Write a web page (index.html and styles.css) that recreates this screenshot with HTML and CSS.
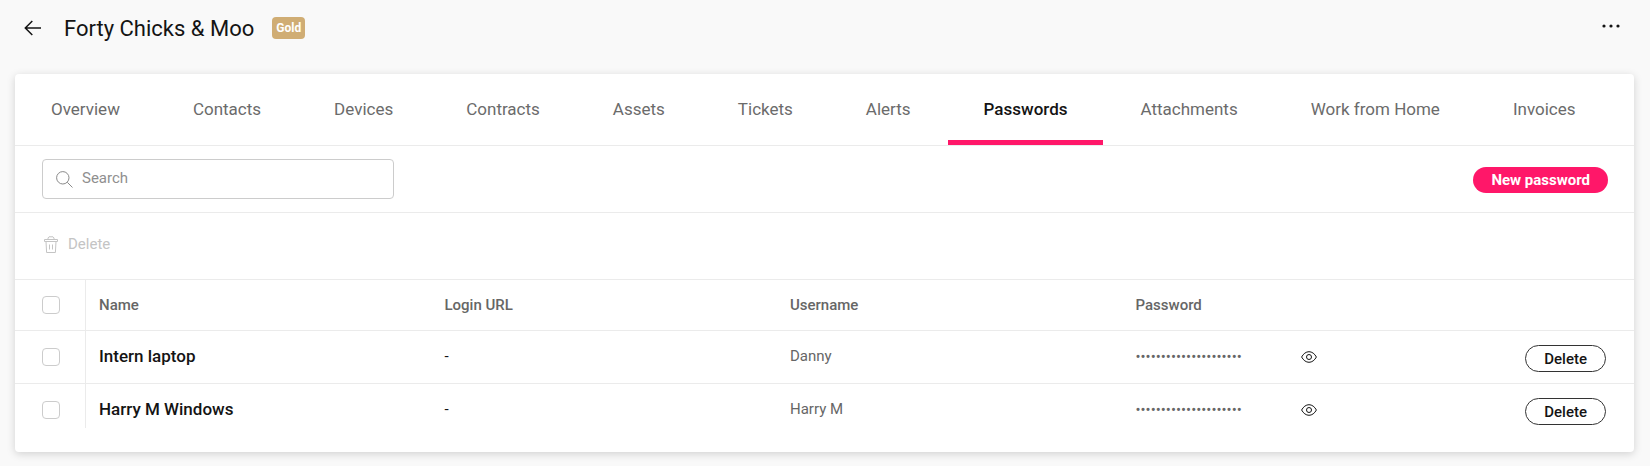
FILE: index.html
```html
<!DOCTYPE html>
<html lang="en">
<head>
<meta charset="utf-8">
<title>Forty Chicks &amp; Moo</title>
<link rel="stylesheet" href="styles.css">
</head>
<body>
<svg width="0" height="0" class="sprite" aria-hidden="true">
  <symbol id="eye" viewBox="0 0 16 12">
    <path d="M.6 6C2.400 2.700 5 .7 8 .7S13.600 2.700 15.400 6C13.600 9.300 11 11.300 8 11.300S2.400 9.300.6 6z"/>
    <circle cx="8" cy="6" r="2.500"/>
  </symbol>
</svg>
<header class="page-header">
  <button class="icon-button" type="button" aria-label="Back">
    <svg class="icon-back" viewBox="0 0 18 16"><path d="M17 8H1.500M8.300 1 1.300 8l7 7"/></svg>
  </button>
  <h1 class="title">Forty Chicks &amp; Moo</h1>
  <span class="badge">Gold</span>
  <button class="icon-button more" type="button" aria-label="More actions">
    <svg class="icon-more" viewBox="0 0 18 4"><circle cx="2" cy="2" r="1.600"/><circle cx="9" cy="2" r="1.600"/><circle cx="16" cy="2" r="1.600"/></svg>
  </button>
</header>
<main class="card">
  <nav class="tabs">
    <a class="tab" href="#">Overview</a>
    <a class="tab" href="#">Contacts</a>
    <a class="tab" href="#">Devices</a>
    <a class="tab" href="#">Contracts</a>
    <a class="tab" href="#">Assets</a>
    <a class="tab" href="#">Tickets</a>
    <a class="tab" href="#">Alerts</a>
    <a class="tab tab-active" href="#" aria-current="page">Passwords</a>
    <a class="tab" href="#">Attachments</a>
    <a class="tab" href="#">Work from Home</a>
    <a class="tab" href="#">Invoices</a>
  </nav>
  <div class="toolbar">
    <label class="search">
      <svg class="icon-search" viewBox="0 0 17 17"><circle cx="6.800" cy="6.800" r="6.200"/><path d="m11.300 11.300 5.200 5.200"/></svg>
      <input class="search-input" type="text" placeholder="Search" aria-label="Search">
    </label>
    <button class="primary" type="button">New password</button>
  </div>
  <div class="bulk">
    <button class="bulk-delete" type="button" disabled>
      <svg class="icon-trash" viewBox="0 0 14 17"><path d="M.5 5.500v-2h13v2zM4 3.500V2L5 .8h4L10 2v1.500M2 5.500l.6 11h8.800l.6-11M5.500 8.500v5M8.500 8.500v5"/></svg>
      Delete
    </button>
  </div>
  <table class="grid">
    <colgroup><col class="col-check"><col><col><col><col><col class="col-action"></colgroup>
    <thead>
      <tr>
        <th class="check"><input class="box" type="checkbox" aria-label="Select all"></th>
        <th>Name</th><th>Login URL</th><th>Username</th><th>Password</th><th></th>
      </tr>
    </thead>
    <tbody>
      <tr>
        <td class="check"><input class="box" type="checkbox" aria-label="Select Intern laptop"></td>
        <td class="name">Intern laptop</td><td class="url">-</td><td>Danny</td>
        <td><div class="secret"><span class="dots">•••••••••••••••••••••</span><button class="icon-button" type="button" aria-label="Show password"><svg class="icon-eye"><use href="#eye"/></svg></button></div></td>
        <td class="action"><button class="outline" type="button">Delete</button></td>
      </tr>
      <tr>
        <td class="check"><input class="box" type="checkbox" aria-label="Select Harry M Windows"></td>
        <td class="name">Harry M Windows</td><td class="url">-</td><td>Harry M</td>
        <td><div class="secret"><span class="dots">•••••••••••••••••••••</span><button class="icon-button" type="button" aria-label="Show password"><svg class="icon-eye"><use href="#eye"/></svg></button></div></td>
        <td class="action"><button class="outline" type="button">Delete</button></td>
      </tr>
    </tbody>
  </table>
</main>
</body>
</html>
```
FILE: styles.css
```css
* { box-sizing: border-box; }
body {
  margin: 0;
  padding: 0 16px 14px 15px;
  background: #f9f9f9;
  color: #141414;
  font-family: Roboto, "Liberation Sans", sans-serif;
  font-size: 15px;
}
button, input { font: inherit; color: inherit; }
svg { display: block; fill: none; stroke: currentColor; }
.sprite { position: absolute; }
.icon-button { padding: 0; border: 0; background: none; color: #141414; cursor: pointer; }

.page-header {
  display: flex;
  align-items: center;
  height: 74px;
  padding: 0 14px 18px 9px;
}
.icon-back { width: 18px; height: 16px; stroke-width: 1.5; }
.title { margin: 0 18px 0 22px; padding-top: 2px; font-size: 22px; font-weight: 400; line-height: 28px; }
.badge {
  padding: 0 4px;
  border-radius: 4px;
  background: #d0ad74;
  color: #fff;
  font-size: 12px;
  font-weight: 700;
  line-height: 22px;
}
.more { margin-left: auto; padding-bottom: 4px; }
.icon-more { width: 18px; height: 4px; fill: currentColor; stroke: none; }

.card {
  padding-bottom: 24px;
  border-radius: 4px;
  background: #fff;
  box-shadow: 0 2px 8px rgba(0, 0, 0, .16);
}
.tabs { display: flex; gap: 1px; border-bottom: 1px solid #ebebeb; }
.tab {
  padding: 4px 36px 0;
  border-bottom: 5px solid transparent;
  color: #6b6b6b;
  font-size: 17px;
  line-height: 62px;
  text-decoration: none;
  white-space: nowrap;
}
.tab-active { border-color: #ff1769; color: #141414; font-weight: 500; }

.toolbar {
  display: flex;
  align-items: center;
  justify-content: space-between;
  padding: 13px 26px 13px 27px;
  border-bottom: 1px solid #ebebeb;
}
.search {
  display: flex;
  align-items: center;
  gap: 9px;
  width: 352px;
  height: 40px;
  padding: 0 13px;
  border: 1px solid #ccc;
  border-radius: 4px;
  color: #8a8a8a;
}
.icon-search { flex: none; width: 17px; height: 17px; }
.search-input { flex: 1; min-width: 0; padding: 0 0 2px; border: 0; outline: 0; background: none; }
.search-input::placeholder { color: #8f8f8f; opacity: 1; }
.primary {
  height: 26px;
  margin-top: 2px;
  padding: 0 18px;
  border: 0;
  border-radius: 13px;
  background: #ff1769;
  color: #fff;
  font-weight: 700;
}
.bulk { display: flex; align-items: center; height: 67px; padding: 0 29px 4px; border-bottom: 1px solid #ebebeb; }
.bulk-delete {
  display: flex;
  align-items: center;
  gap: 10px;
  padding: 0;
  border: 0;
  background: none;
  color: #c4c4c4;
}
.icon-trash { width: 14px; height: 17px; }

.grid { width: 100%; border-collapse: separate; border-spacing: 0; table-layout: fixed; }
.col-check { width: 71px; }
.col-action { width: 166px; }
th, td {
  padding: 13px 13px 11px;
  border-bottom: 1px solid #ebebeb;
  color: #666;
  font-weight: 400;
  line-height: 24px;
  text-align: left;
  vertical-align: top;
}
th { padding: 13px; font-weight: 500; }
.check { padding-left: 27px; border-right: 1px solid #ebebeb; }
td.check, td.action { padding-top: 14px; }
tbody tr:last-child td { padding-bottom: 3px; border-bottom: 0; }
.box {
  display: block;
  appearance: none;
  width: 18px;
  height: 18px;
  margin: 3px 0;
  border: 1px solid #ccc;
  border-radius: 4px;
  background: #fff;
}
.name { color: #141414; font-size: 17px; font-weight: 500; }
.url { color: #141414; }
.secret { display: flex; align-items: center; height: 26px; }
.dots { flex: none; width: 165px; }
.icon-eye { width: 16px; height: 12px; }
.action { padding-right: 28px; }
.outline {
  display: block;
  height: 27px;
  margin-left: auto;
  padding: 0 18px;
  border: 1px solid #333;
  border-radius: 14px;
  background: #fff;
  color: #141414;
  font-weight: 500;
}
```
